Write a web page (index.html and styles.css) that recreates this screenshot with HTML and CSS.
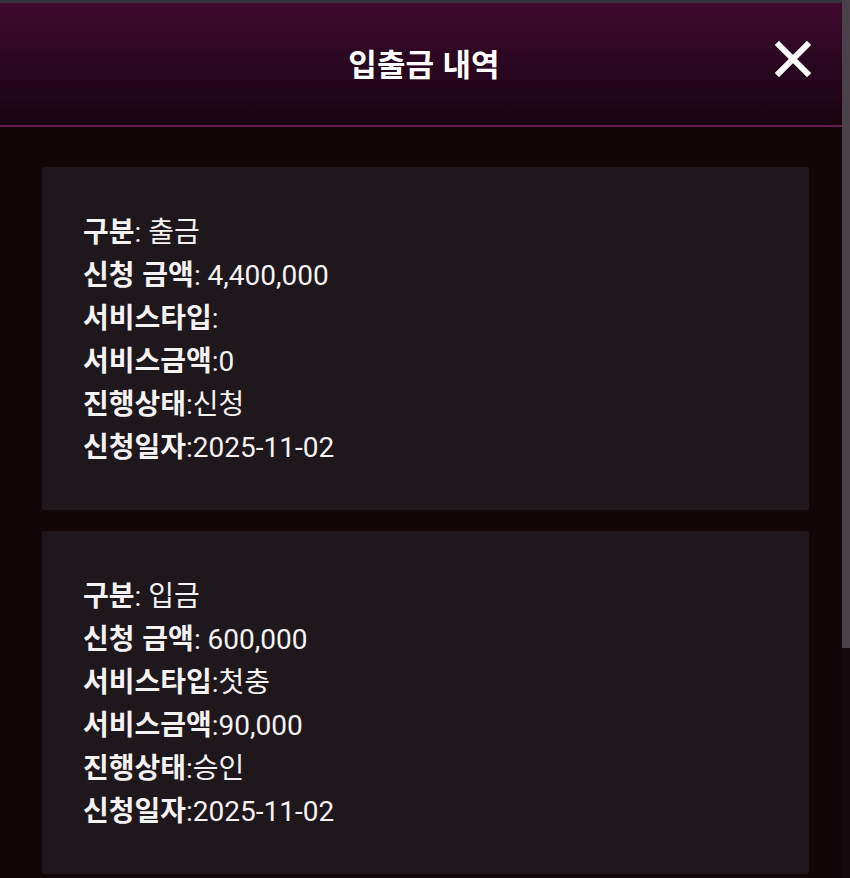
FILE: index.html
```html
<!DOCTYPE html>
<html lang="ko">
<head>
<meta charset="utf-8">
<link rel="stylesheet" href="styles.css">
</head>
<body>
<div class="page">
  <div class="main">
    <div class="topline"></div>
    <header class="header">
      <h1 class="title">입출금 내역</h1>
      <button class="close" aria-label="닫기">
        <svg width="38" height="38" viewBox="0 0 38 38"><path d="M5 5 L33 33 M33 5 L5 33" stroke="#fff" stroke-width="6" stroke-linecap="square"/></svg>
      </button>
    </header>
    <div class="list">
      <div class="card">
        <div class="row"><b>구분</b>: 출금</div>
        <div class="row"><b>신청 금액</b>: 4,400,000</div>
        <div class="row"><b>서비스타입</b>:</div>
        <div class="row"><b>서비스금액</b>:0</div>
        <div class="row"><b>진행상태</b>:신청</div>
        <div class="row"><b>신청일자</b>:2025-11-02</div>
      </div>
      <div class="card">
        <div class="row"><b>구분</b>: 입금</div>
        <div class="row"><b>신청 금액</b>: 600,000</div>
        <div class="row"><b>서비스타입</b>:첫충</div>
        <div class="row"><b>서비스금액</b>:90,000</div>
        <div class="row"><b>진행상태</b>:승인</div>
        <div class="row"><b>신청일자</b>:2025-11-02</div>
      </div>
    </div>
  </div>
  <div class="scrollbar"><div class="thumb"></div></div>
</div>
</body>
</html>
```
FILE: styles.css
```css
html, body {
  margin: 0;
  padding: 0;
  background: #110709;
  height: 100%;
  overflow: hidden;
}
body {
  font-family: Roboto, "Noto Sans CJK KR", sans-serif;
  color: #fff;
}
.page {
  display: flex;
  height: 878px;
}
.main {
  flex: 1;
  display: flex;
  flex-direction: column;
  overflow: hidden;
}
.topline {
  flex-shrink: 0;
  height: 3px;
  background: #36323d;
}
.header {
  flex-shrink: 0;
  height: 124px;
  box-sizing: border-box;
  border-bottom: 2px solid #66194f;
  background: linear-gradient(180deg, #3e0a2d 0%, #2a0720 50%, #17040e 100%);
  display: flex;
  align-items: center;
  justify-content: center;
  position: relative;
  padding-left: 6px;
}
.title {
  margin: 0;
  font-family: "Noto Sans CJK KR", sans-serif;
  font-weight: 700;
  font-size: 31px;
  margin-top: -4px;
}
.close {
  position: absolute;
  right: 30px;
  top: 37px;
  background: none;
  border: 0;
  padding: 0;
  width: 38px;
  height: 38px;
}
.close svg { display: block; }
.list {
  flex-shrink: 0;
  padding: 40px 33px 0 42px;
  display: flex;
  flex-direction: column;
  gap: 21px;
}
.card {
  flex-shrink: 0;
  background: #1e171b;
  padding: 42px 41px 43px;
  border-radius: 2px;
}
.row {
  font-size: 28px;
  line-height: 43px;
  height: 43px;
  color: #f4f2f3;
  white-space: nowrap;
}
.row b {
  font-family: "Noto Sans CJK KR", sans-serif;
  font-weight: 700;
}
.scrollbar {
  width: 8px;
  background: #140a0e;
}
.thumb {
  height: 648px;
  background: #4a4249;
}
```
